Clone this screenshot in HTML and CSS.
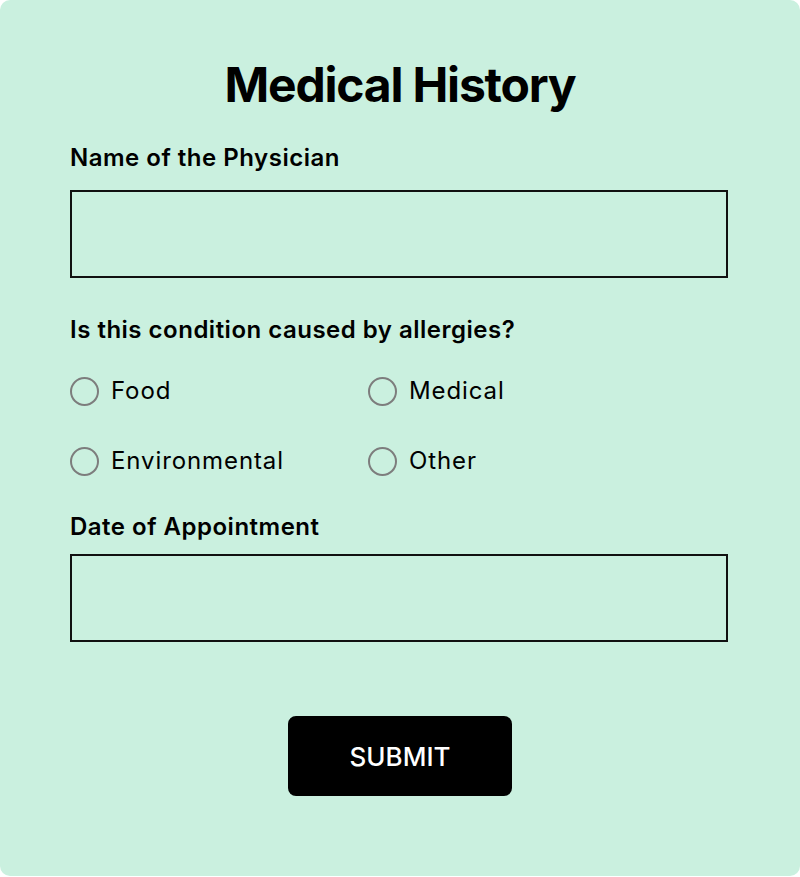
FILE: index.html
```html
<!DOCTYPE html>
<html lang="en">

<head>
    <meta charset="UTF-8">
    <meta name="viewport" content="width=device-width, initial-scale=1.0">
    <title>Medical History</title>
    <link rel="stylesheet" href="styles.css">
</head>

<body>
    <div class="card">
        <h1>Medical History</h1>

        <form class="history-form">
            <div class="field">
                <label for="physician">Name of the Physician</label>
                <input type="text" id="physician">
            </div>

            <div class="field">
                <p class="question">Is this condition caused by allergies?</p>
                <div class="options">
                    <label class="option"><input type="radio" name="allergy" value="food"> Food</label>
                    <label class="option"><input type="radio" name="allergy" value="medical"> Medical</label>
                    <label class="option"><input type="radio" name="allergy" value="environmental"> Environmental</label>
                    <label class="option"><input type="radio" name="allergy" value="other"> Other</label>
                </div>
            </div>

            <div class="field field-date">
                <label for="appointment">Date of Appointment</label>
                <input type="text" id="appointment">
            </div>

            <button type="submit" class="submit-btn">SUBMIT</button>
        </form>
    </div>
</body>
</html>
```

FILE: styles.css
```css
:root {
    --card-bg: #caf0df;
    --text-color: #000000;
    --radio-border: #7d7d7d;
}

* {
    margin: 0;
    padding: 0;
    box-sizing: border-box;
}

body {
    font-family: Inter, 'Noto Sans', sans-serif;
    background-color: #ffffff;
    color: var(--text-color);
}

.card {
    width: 800px;
    height: 876px;
    background-color: var(--card-bg);
    border-radius: 10px;
    padding: 56px 72px 0 70px;
}

h1 {
    font-size: 48px;
    line-height: 58px;
    font-weight: 700;
    letter-spacing: -1.2px;
    text-align: center;
    margin-bottom: 28px;
    padding-left: 2px;
}

.field label,
.question {
    display: block;
    font-size: 24px;
    line-height: 32px;
    font-weight: 600;
    letter-spacing: 0.5px;
    margin-bottom: 16px;
}

.field {
    margin-bottom: 36px;
}

input[type="text"] {
    display: block;
    width: 658px;
    height: 88px;
    border: 2px solid #111111;
    background: transparent;
    font-family: inherit;
    font-size: 22px;
    padding: 0 16px;
}

.question {
    margin-bottom: 25px;
}

.options {
    display: grid;
    grid-template-columns: 298px 298px;
    row-gap: 30px;
}

.field .option {
    display: flex;
    align-items: center;
    height: 40px;
    font-weight: 400;
    letter-spacing: 0.9px;
    margin: 0;
}

.option input[type="radio"] {
    appearance: none;
    -webkit-appearance: none;
    width: 29px;
    height: 29px;
    border: 2px solid var(--radio-border);
    border-radius: 50%;
    margin-right: 12px;
    flex-shrink: 0;
}

.field-date {
    margin-top: -6px;
    margin-bottom: 0;
}

.field-date label {
    margin-bottom: 11px;
}

.submit-btn {
    display: block;
    width: 224px;
    height: 80px;
    margin: 74px auto 0;
    background-color: #000000;
    color: #ffffff;
    border: none;
    border-radius: 8px;
    font-family: inherit;
    font-size: 26px;
    font-weight: 500;
    cursor: pointer;
    position: relative;
    left: 1px;
}
```
